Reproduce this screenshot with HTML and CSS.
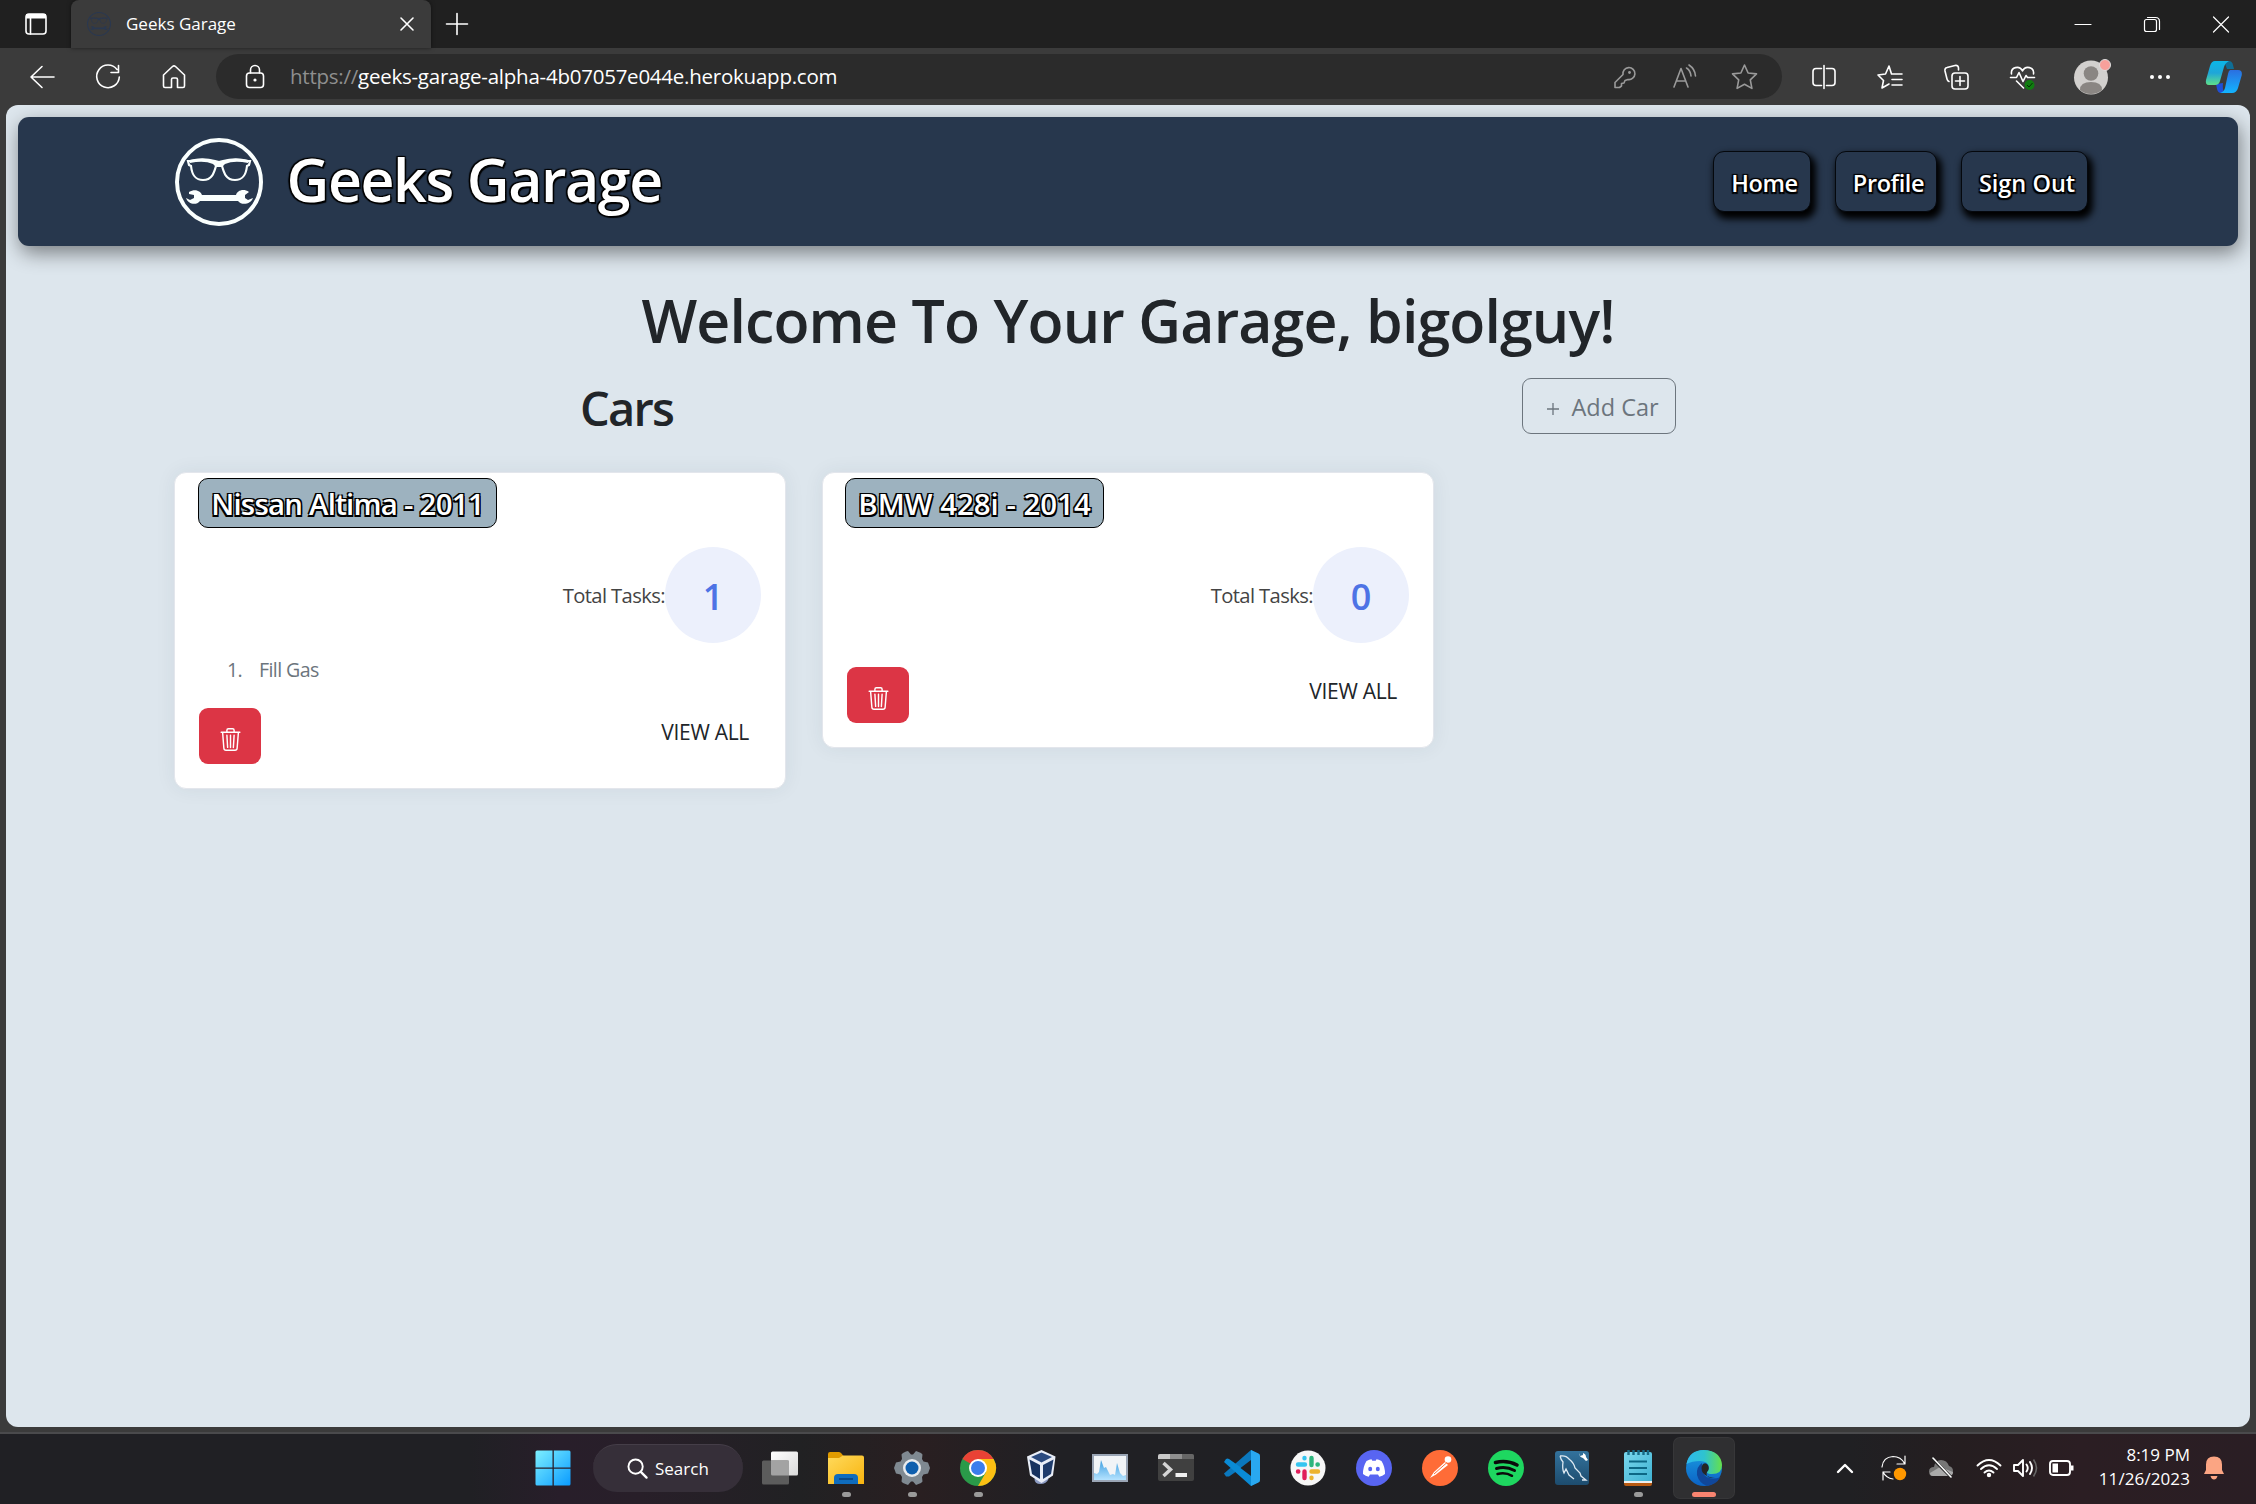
FILE: index.html
```html
<!DOCTYPE html>
<html lang="en">
<head>
<meta charset="utf-8">
<title>Geeks Garage</title>
<link rel="stylesheet" href="styles.css">
</head>
<body>
<svg class="defs" width="0" height="0">
  <defs>
    <symbol id="geek" viewBox="0 0 88 88">
      <circle cx="44" cy="44" r="42" fill="none" stroke="currentColor" stroke-width="4"/>
      <path fill="none" stroke="currentColor" stroke-width="2.2" d="M15 23c8-2 17-2 25 0l4 1 4-1c8-2 17-2 25 0l2 0-1 4-2 1c-1 9-4 14-12 14-9 0-11-7-13-14h-6c-2 7-4 14-13 14-8 0-11-5-12-14l-2-1-1-4z"/>
      <path fill="currentColor" d="M15 22q14-3 26 1h6q12-4 26-1v3q-14-3-23 1l-3 3h-6l-3-3q-9-4-23-1z"/>
      <path fill="currentColor" d="M14 54c7-4 12 0 13 3h34c1-4 7-7 13-3l-4 3v3l3 2 5-2c-2 6-11 8-15 3H25c-4 5-12 3-14-3l4 2 4-2v-3l-5-1z"/>
    </symbol>
    <symbol id="trash" viewBox="0 0 16 16">
      <path fill="currentColor" d="M6.5 1h3a.5.5 0 0 1 .5.5v1H6v-1a.5.5 0 0 1 .5-.5ZM11 2.500v-1A1.500 1.500 0 0 0 9.500 0h-3A1.500 1.500 0 0 0 5 1.500v1H2.506a.58.58 0 0 0-.01 0H1.500a.5.5 0 0 0 0 1h.538l.853 10.660A2 2 0 0 0 4.885 16h6.230a2 2 0 0 0 1.994-1.840l.853-10.660h.538a.5.5 0 0 0 0-1h-.995a.59.59 0 0 0-.01 0H11Zm1.958 1-.846 10.580a1 1 0 0 1-.997.920h-6.230a1 1 0 0 1-.997-.920L3.042 3.500h9.916Zm-7.487 1a.5.5 0 0 1 .528.470l.5 8.500a.5.5 0 0 1-.998.060L5 5.030a.5.5 0 0 1 .470-.530Zm5.058 0a.5.5 0 0 1 .470.530l-.5 8.500a.5.5 0 1 1-.998-.060l.5-8.500a.5.5 0 0 1 .528-.470ZM8 4.500a.5.5 0 0 1 .5.500v8.500a.5.5 0 0 1-1 0V5a.5.5 0 0 1 .5-.500Z"/>
    </symbol>
  </defs>
</svg>
<div class="screen">
  <div class="tabbar">
    <div class="tab-actions"><svg class="i36" viewBox="0 0 36 36"><rect x="8" y="8" width="20" height="20" rx="3" class="ln"/><path d="M8 8h20v4.500H8z" fill="#fff"/><path d="M12.500 12v16" class="ln"/></svg></div>
    <div class="tab">
      <svg class="favicon"><use href="#geek"/></svg>
      <span class="tab-title">Geeks Garage</span>
      <svg class="tab-close" viewBox="0 0 14 14"><path class="ln" d="M1 1l12 12M13 1L1 13"/></svg>
    </div>
    <svg class="new-tab" viewBox="0 0 22 22"><path class="ln" d="M11 .5v21M.5 11h21"/></svg>
    <div class="window-controls">
      <svg class="i36" viewBox="0 0 36 36"><path class="ln thin" d="M10 18.500h16"/></svg>
      <svg class="i36" viewBox="0 0 36 36"><rect class="ln thin" x="10.500" y="13.500" width="12" height="12" rx="2"/><path class="ln thin" d="M13.500 11.500h8q4 0 4 4v8"/></svg>
      <svg class="i36" viewBox="0 0 36 36"><path class="ln thin" d="M10.500 11l15 15M25.500 11l-15 15"/></svg>
    </div>
  </div>

  <div class="toolbar">
    <div class="nav-icons">
      <svg class="i36" viewBox="0 0 36 36"><path class="ln" d="M30 18H7M18 7.500L7 18l11 10.500"/></svg>
      <svg class="i36" viewBox="0 0 36 36"><path class="ln" d="M27 10.500A11.300 11.300 0 1 0 29.300 18M28.500 6.500V13.500H21"/></svg>
      <svg class="i36" viewBox="0 0 36 36"><path class="ln" d="M7.500 16L16.500 7.500q1.500-1.300 3 0L28.500 16v11q0 1.500-1.500 1.500h-5.500v-8q0-1.500-1.500-1.500h-3q-1.500 0-1.500 1.500v8H9q-1.500 0-1.500-1.500z"/></svg>
    </div>
    <div class="address">
      <svg class="i36" viewBox="0 0 36 36"><rect class="ln" x="9.500" y="14" width="17" height="14.500" rx="3"/><path class="ln" d="M13.500 14v-3a4.500 4.500 0 0 1 9 0v3"/><circle cx="18" cy="21" r="1.600" fill="#fff"/></svg>
      <span class="url"><span class="scheme">https://</span><span class="host">geeks-garage-alpha-4b07057e044e.herokuapp.com</span></span>
      <div class="address-icons">
        <svg class="i36" viewBox="0 0 36 36"><path class="ln" d="M9 23.500l8-8a6 6 0 1 1 5 5l-3 1-1 2.500-2.500.5v2.500l-2 1.500H9z"/><circle cx="23.500" cy="13.500" r="1.400" fill="#9a9a9a"/></svg>
        <svg class="i36" viewBox="0 0 36 36"><path class="ln" d="M8 28L15 9.500 22 28M10.500 22h9M20.500 9q4 2.500 4.500 8M23 6q6 4 6.500 11"/></svg>
        <svg class="i36" viewBox="0 0 36 36"><path class="ln" d="M18.500 6l3.600 8 8.400.900-6.200 6 1.600 8.500L18.500 25.300l-7.400 4.100 1.600-8.500-6.200-6 8.400-.900z"/></svg>
      </div>
    </div>
    <div class="browser-icons">
      <svg class="i36" viewBox="0 0 36 36"><path class="ln" d="M15.500 9.500H10q-3 0-3 3v11q0 3 3 3h5.500M20.500 9.500H26q3 0 3 3v11q0 3-3 3h-5.500M18 6.500v23"/></svg>
      <svg class="i36" viewBox="0 0 36 36"><path class="ln" d="M26 15h-7.500L16 7l-3.500 8-7.500 1 5.500 5.500L9 29l7-4M20 15h9M19 20.500h10M19 26h10"/></svg>
      <svg class="i36" viewBox="0 0 36 36"><rect class="ln" x="13" y="14" width="16" height="16" rx="3"/><path class="ln" d="M21 17.500v9M16.500 22h9M19.500 11V9q-.5-3-3.500-2.500L8 8.500Q5.500 9 6 12l2 8q.5 2 2 2.500"/></svg>
      <svg class="i36" viewBox="0 0 36 36"><path class="ln" d="M5.500 15c-1-7 8-9 11-3 3-6 12-4 11 3M4.500 18.500h6l2.500-5 4 9 3-6 1.500 2h7M10.500 22l7 7"/><circle cx="23.500" cy="26" r="5" fill="#107c10"/><path d="M21 26l2 2 3.500-4" fill="none" stroke="#052e05"/></svg>
      <svg class="i36" viewBox="0 0 36 36"><circle cx="17" cy="18.500" r="17" fill="#d2d0ce"/><circle cx="17" cy="14.500" r="7.300" fill="#8a8683"/><path d="M6 31q0-8 11-8t11 8a17 17 0 0 1-22 0z" fill="#8a8683"/><circle cx="31" cy="6" r="5.500" fill="#f8a09b" stroke="#ddd"/></svg>
      <svg class="i36" viewBox="0 0 36 36"><g fill="#fff"><circle cx="9" cy="18" r="2"/><circle cx="17" cy="18" r="2"/><circle cx="25" cy="18" r="2"/></g></svg>
      <svg class="i36" viewBox="0 0 36 36">
        <defs><linearGradient id="cpa" x2="0" y2="1"><stop offset="0" stop-color="#0bb7e8"/><stop offset=".5" stop-color="#1fa6d8"/><stop offset="1" stop-color="#5fe08a"/></linearGradient><linearGradient id="cpb" x2="0" y2="1"><stop offset="0" stop-color="#2b6fe0"/><stop offset="1" stop-color="#12b4ff"/></linearGradient></defs>
        <path d="M10 25l7-1q-1 7 2 10h-4q-3 0-4-4z" fill="#1f4fd8"/><path d="M18 2h5q3 0 4 4l1 4h-7z" fill="#0f6e96"/>
        <path d="M9 2h14q-4 2-5 6l-4 14q-1 4-5 4H3Q-1 26 0 21L4 7q1.500-5 5-5z" fill="url(#cpa)"/>
        <path d="M24 11h8q4.500 0 3.800 5L32 29q-1.500 5-6 5H14q4-1 5-5l3-14q.5-3 2-4z" fill="url(#cpb)"/></svg>
    </div>
  </div>

  <main class="page">
    <header class="site-nav">
      <a class="brand"><svg class="brand-logo"><use href="#geek"/></svg><span class="brand-name">Geeks Garage</span></a>
      <nav class="links">
        <a class="link home">Home</a>
        <a class="link profile">Profile</a>
        <a class="link signout">Sign Out</a>
      </nav>
    </header>
    <h1 class="welcome"><span>Welcome To Your Garage, bigolguy!</span></h1>
    <div class="cars-head">
      <h2 class="cars-title">Cars</h2>
      <button class="add-car"><svg class="plus" viewBox="0 0 12 12"><path d="M6 0v12M0 6h12" stroke="currentColor" stroke-width="1.300"/></svg><span>Add Car</span></button>
    </div>
    <section class="cards">
      <article class="card">
        <h3 class="badge nissan">Nissan Altima - 2011</h3>
        <div class="stat"><span class="stat-label">Total Tasks:</span><span class="stat-count">1</span></div>
        <ol class="tasks"><li class="task"><span class="task-no">1.</span><span class="task-name">Fill Gas</span></li></ol>
        <div class="actions"><button class="delete"><svg class="trash"><use href="#trash"/></svg></button><a class="view-all">VIEW ALL</a></div>
      </article>
      <article class="card">
        <h3 class="badge bmw">BMW 428i - 2014</h3>
        <div class="stat"><span class="stat-label">Total Tasks:</span><span class="stat-count">0</span></div>
        <div class="actions"><button class="delete"><svg class="trash"><use href="#trash"/></svg></button><a class="view-all">VIEW ALL</a></div>
      </article>
    </section>
  </main>

  <footer class="taskbar">
    <div class="apps">
      <div class="app start"><svg class="i36" viewBox="0 0 36 36"><defs><linearGradient id="win" x2="1" y2="1"><stop offset="0" stop-color="#7df0ff"/><stop offset="1" stop-color="#0a9bff"/></linearGradient></defs><path fill="url(#win)" d="M2 .5h15.500v17H.5V2Q.5.5 2 .5zM18.800.5H34q1.500 0 1.500 1.500v15.500H18.800zM.5 18.800h17v16.700H2Q.5 35.500.5 34zM18.800 18.800h16.700V34q0 1.500-1.500 1.500H18.800z"/></svg></div>
      <div class="search"><svg class="lens" viewBox="0 0 22 22"><circle cx="9" cy="9" r="7.500" fill="none" stroke="#fff" stroke-width="2"/><path d="M14.500 14.500l6 6" stroke="#fff" stroke-width="2.400" stroke-linecap="round"/></svg><span>Search</span></div>
      <div class="app"><svg class="i36" viewBox="0 0 36 36"><defs><linearGradient id="tv" x2="1" y2="1"><stop offset="0" stop-color="#fff"/><stop offset="1" stop-color="#d9d9d9"/></linearGradient></defs><rect x="9" y="1.500" width="27" height="24" rx="1.500" fill="url(#tv)"/><rect x="0" y="10.500" width="27" height="24" rx="1.500" fill="#5c5c5c"/><path d="M9 10.500h18v15H10.500Q9 25.500 9 24z" fill="#a3a3a3"/></svg></div>
      <div class="app"><svg class="i36" viewBox="0 0 36 36"><defs><linearGradient id="fo" x2="1" y2="1"><stop offset="0" stop-color="#ffda5c"/><stop offset="1" stop-color="#f8b40f"/></linearGradient></defs><path d="M0 9V4q0-2 2-2h9q1.500 0 2.500 1.500L15.500 6v3z" fill="#e09b00"/><path d="M0 8h11l4-2.500h19q2 0 2 2V34H0z" fill="url(#fo)"/><path d="M6 34v-6q0-4 4-4h16q4 0 4 4v6z" fill="#0f6cbd"/><path d="M11 29h14" stroke="#0a3f78" stroke-width="1.500"/></svg><i class="dot"></i></div>
      <div class="app"><svg class="i36" viewBox="0 0 36 36"><path d="M12 1.500l2-.5 3 3.500h2L22 1l5 2 1.500 1.500L28 9l1.500 2.500 4.500 1L36 18l-2 5.500-4.500 1L28 27l.5 4.500L27 33l-5 2-3-3.500h-2L14 35l-5-2-1.500-1.500L8 27l-1.500-2.500-4.500-1L0 18l2-5.500 4.500-1L8 9l-.5-4.500L9 3z" fill="#7f8991"/><circle cx="18" cy="18" r="9" fill="#e8ebee"/><circle cx="18" cy="18" r="6.500" fill="#0f5fae"/></svg><i class="dot"></i></div>
      <div class="app"><svg class="i36" viewBox="0 0 36 36"><circle cx="18" cy="18" r="18" fill="#2a9a49"/><path d="M18 18L2.400 9A18 18 0 0 1 33.600 9z" fill="#e94235"/><path d="M18 9h15.600A18 18 0 0 1 18 36l7.800-13.500z" fill="#fcbf13"/><circle cx="18" cy="18" r="9" fill="#fff"/><circle cx="18" cy="18" r="7" fill="#3b7ded"/></svg><i class="dot"></i></div>
      <div class="app"><svg class="i36" viewBox="1.500 0 36 36"><path d="M10 29q0 5 6 5t8-5l-3-5h-8z" fill="#8d9cc4"/><path d="M17 0l14 6.500-2.500 19L17 33 5.500 25.500 2.500 6.500z" fill="#e9eef8"/><path d="M17 2.500l10.500 4.500L17 12.500 6.500 7z" fill="#2a4a80"/><path d="M5 9.500l10.500 5.500v14L7.500 24z" fill="#17325f"/><path d="M29 9.500L18.500 15v14l8-5z" fill="#1f3c6c"/></svg></div>
      <div class="app"><svg class="i36" viewBox="0 0 36 36"><defs><linearGradient id="pm" x2="0" y2="1"><stop offset="0" stop-color="#3f9fe0"/><stop offset="1" stop-color="#b5e3ff"/></linearGradient></defs><rect x="1" y="5" width="34" height="26" fill="#f1f4f7" stroke="#9aa5b5" stroke-width="2"/><path d="M2 30v-7l3 1 2-2 2-12 3 8 2-1 4 8 3-1 2 1 2-12 3 10 3 3 3-1v5z" fill="url(#pm)"/></svg></div>
      <div class="app"><svg class="i36" viewBox="0 0 36 36"><rect y="4" width="36" height="27" rx="2" fill="#404040"/><path d="M0 9V6q0-2 2-2h10v5z" fill="#c9c9c9"/><path d="M12 4h12v5H12z" fill="#8f8f8f"/><path d="M24 4h10q2 0 2 2v3H24z" fill="#666"/><path d="M5.500 13l7 6.500-7 6.500" fill="none" stroke="#d5d5d5" stroke-width="3.500"/><path d="M17.500 23h11.500v4H17.500z" fill="#f0f0f0"/></svg></div>
      <div class="app"><svg class="i36" viewBox="0 0 36 36"><path d="M27 0L0 23.500l2 3 3 0L36 5z" fill="#0b78be"/><path d="M27 36L0 12l2-3q1.500-.8 3 0L36 31z" fill="#0a8bd6"/><path d="M27 0l7.500 3.500Q36 4.300 36 6v24q0 1.700-1.500 2.500L27 36z" fill="#29a8f0"/><path d="M27 10v16l-10.500-8z" fill="#202023"/></svg></div>
      <div class="app"><svg class="i36" viewBox="0 0 36 36"><circle cx="18" cy="18" r="17.500" fill="#f7f7f7"/><g stroke-width="4.400" stroke-linecap="round"><path d="M14.500 8v.3M8 14.500h7" stroke="#36c5f0"/><path d="M21.500 8v7M27.500 14.500h.3" stroke="#2eb67d"/><path d="M21.500 21.500h6.500M21.500 27.800v.2" stroke="#ecb22e"/><path d="M14.500 21.500v6.500M8 21.500h.3" stroke="#e01e5a"/></g></svg></div>
      <div class="app"><svg class="i36" viewBox="0 0 36 36"><circle cx="18" cy="18" r="18" fill="#5865f2"/><path d="M10.500 11q3-1.700 5-1.800l.8 1.500h3.400l.8-1.500q2 .1 5 1.800 3.700 6 3.500 13-2.500 2.200-5.700 2.700l-1.300-2.200h-8l-1.300 2.200Q9.500 26.200 7 24q-.2-7 3.500-13z" fill="#fff"/><ellipse cx="14.200" cy="19" rx="2" ry="2.300" fill="#5865f2"/><ellipse cx="21.800" cy="19" rx="2" ry="2.300" fill="#5865f2"/></svg></div>
      <div class="app"><svg class="i36" viewBox="0 0 36 36"><circle cx="18" cy="18" r="18" fill="#ff6c37"/><circle cx="26" cy="9.500" r="3.300" fill="#fff"/><path d="M23 12l3 3-12 9.500-6 3.500 4-6z" fill="#fff"/><path d="M12 24L25 12.500" stroke="#ff6c37"/></svg></div>
      <div class="app"><svg class="i36" viewBox="0 0 36 36"><circle cx="18" cy="18" r="18" fill="#1ed760"/><g fill="none" stroke="#0b0b0b" stroke-linecap="round"><path d="M7.500 12.500q11-3 21.500 2.500" stroke-width="3.600"/><path d="M8.500 18.500q9.500-2.500 18 2" stroke-width="3"/><path d="M9.500 24q8-2 14.500 1.800" stroke-width="2.500"/></g></svg></div>
      <div class="app"><svg class="i36" viewBox="0 0 36 36"><defs><linearGradient id="my" x2="0" y2="1"><stop offset="0" stop-color="#33729c"/><stop offset="1" stop-color="#1d4c6e"/></linearGradient></defs><rect x="1" y="1" width="34" height="34" rx="3" fill="url(#my)"/><path d="M6 6q6-1 9 3 5 4 6 9l5 5 1 3 5 4-4 0M6 6q1 4 3 6-1 7 1 11l2-4 3 6 5 4" fill="none" stroke="#dfeaf2" stroke-width="1.300"/><path d="M25 3l1 3 3-1 0-2q3 1 3 4l2 3-2 1-3-3q-4-1-4-5z" fill="#fff"/></svg></div>
      <div class="app"><svg class="i36" viewBox="0 0 36 36"><defs><linearGradient id="np" x2="1" y2="1"><stop offset="0" stop-color="#7ad8ee"/><stop offset="1" stop-color="#3fb2d2"/></linearGradient></defs><path d="M4 29h28v5q0 2-2 2H6q-2 0-2-2z" fill="#b85a12"/><path d="M4 30h28v3H4z" fill="#eee"/><path d="M4 4q0-2 2-2h24q2 0 2 2v27H4z" fill="url(#np)"/><path d="M8.500 0v5M13.500 0v5M18.500 0v5M23.500 0v5M28 0v5" stroke="#176a86" stroke-width="2.400"/><path d="M9 11.500h18M9 18h18M9 24h18" stroke="#0c6785" stroke-width="1.800"/></svg><i class="dot"></i></div>
      <div class="app active"><svg class="i36" viewBox="0 0 36 36"><defs><linearGradient id="ea"><stop offset="0" stop-color="#2db9ee"/><stop offset=".5" stop-color="#2fc3cf"/><stop offset="1" stop-color="#66e04a"/></linearGradient><linearGradient id="eb" x2="0" y2="1"><stop offset="0" stop-color="#1b9de2"/><stop offset="1" stop-color="#0b62c4"/></linearGradient></defs><circle cx="18" cy="18" r="18" fill="url(#eb)"/><path d="M.5 14Q3 0 18 0q17 1 18 15 0 9-10 9-5 0-5-2 2-2 2-5-1-6-9-6-8 0-13.500 3z" fill="url(#ea)"/><path d="M16 13q-6 4-5 12 2 8 10 11 9-1 13.500-9-7 3-14 0-5-3-4.500-14z" fill="#10479a"/><path d="M17 14q-3 4 0 9 4 5 12 4-6 2-8-1-1-2 0-4 3-3 1-7-2-3-5-1z" fill="#252525"/></svg><i class="dot running"></i></div>
    </div>
    <div class="tray">
      <svg class="t1" viewBox="0 0 24 24"><path class="ln bold" d="M5 16l7-7 7 7"/></svg>
      <svg class="t2" viewBox="0 0 26 26"><path class="ln thin" d="M1 12Q2 2 12 1.500q8 0 11.500 7M24 1v8h-8M2 25v-8h7M2 17q3 6 10 7"/><circle cx="19" cy="19" r="6.200" fill="#ff9800"/></svg>
      <svg class="t3" viewBox="0 0 26 26"><path d="M5 21q-4 0-4-4.500T6 12q1-7 7-7t8 6q4 1 4 5t-4 5z" fill="#777"/><path d="M5 21q-3 0-3-3l10-6 13 5q0 4-4 4z" fill="#aaa"/><path d="M4 3l19 19" stroke="#222" stroke-width="3"/><path d="M5 3l18 19" class="ln"/></svg>
      <svg class="t4" viewBox="0 0 26 26"><path class="ln bold2" d="M1.500 10.500q11.500-11 23 0M5 14q8-7.500 16 0M8.500 17.500q4.500-4 9 0"/><circle cx="13" cy="20" r="2.200" fill="#fff"/></svg>
      <svg class="t5" viewBox="0 0 26 26"><path class="ln bold2" d="M2 10v6h4l5 5V5L6 10zM14.500 9.500q2.500 3.500 0 7M18 7q4 6 0 12"/><path d="M21.500 4.500q6 8.500 0 17" fill="none" stroke="#666" stroke-width="1.600"/></svg>
      <svg class="t6" viewBox="0 0 26 26"><rect class="ln bold2" x="2" y="6" width="20" height="14" rx="3"/><path d="M4.500 8.500h5.500v9H4.500zM23 10.500h2.500v5H23z" fill="#fff"/></svg>
      <div class="clock"><span>8:19 PM</span><span class="date">11/26/2023</span></div>
      <svg class="bell" viewBox="0 0 20 24"><path d="M10 .5q8 0 8 8V14l2 4H0l2-4V8.500q0-8 8-8zM6.500 20h7q-1 3.500-3.500 3.500T6.500 20z" fill="#fba583"/></svg>
    </div>
  </footer>
</div>
</body>
</html>
```
FILE: styles.css
```css
* { box-sizing: border-box; }
body { margin: 0; background: #3b3b3b; font-family: "Open Sans", "Noto Sans", sans-serif; color: #212529; }
h1, h2, h3, ol, button { margin: 0; padding: 0; font: inherit; }
ol { list-style: none; }
.defs { display: block; }
.screen { width: 2256px; height: 1504px; display: flex; flex-direction: column; overflow: hidden; }
.screen svg { display: block; flex: none; overflow: visible; }
.screen span, .link, .view-all, .badge { white-space: nowrap; }
.i36 { width: 36px; height: 36px; }
.ln { fill: none; stroke: #fff; stroke-width: 1.6; stroke-linecap: round; stroke-linejoin: round; }
.thin { stroke-width: 1.2; }
.bold { stroke-width: 2.4; }
.bold2 { stroke-width: 1.9; }

/* Browser chrome */
.tabbar { height: 48px; background: #202020; display: flex; align-items: center; flex: none; }
.tab-actions { width: 71px; padding-left: 18px; }
.tab { width: 360px; height: 48px; background: #3b3b3b; border-radius: 8px 8px 0 0; display: flex; align-items: center; padding: 0 17px 0 16px; box-shadow: 0 0 4px rgba(0,0,0,.5); }
.favicon { width: 24px; height: 24px; color: #2a3850; }
.tab-title { font-size: 17px; color: #fff; margin: -1px 0 0 15px; flex: 1; }
.tab-close { width: 14px; height: 14px; }
.new-tab { width: 22px; height: 22px; margin-left: 15px; }
.window-controls { margin-left: auto; display: flex; gap: 33px; padding-right: 17px; }
.toolbar { height: 57px; display: flex; align-items: center; padding-left: 24px; flex: none; }
.nav-icons { display: flex; gap: 30px; width: 192px; }
.address { width: 1566px; height: 45px; background: #2b2b2b; border-radius: 23px; display: flex; align-items: center; padding: 0 20px 0 21px; }
.url { font-size: 20.5px; letter-spacing: -.24px; color: #fff; margin: -2px 0 0 17px; flex: 1; display: flex; }
.scheme { color: #8f8f8f; }
.address-icons { display: flex; gap: 24px; }
.address-icons .ln { stroke: #9a9a9a; }
.browser-icons { margin-left: 8px; display: grid; grid-template-columns: 67px 67px 66px 67px 70px 67px 60px; justify-items: center; }

/* Site */
.page { margin: 0 6px; height: 1322px; background: #dde6ed; border-radius: 12px; padding: 12px 12px 0; overflow: hidden; flex: none; }
.site-nav { height: 129px; background: #27374d; border-radius: 11px; display: flex; align-items: center; padding: 0 150px 0 157px; box-shadow: 2px 7px 20px rgba(0,0,0,.45); }
.brand { display: flex; align-items: center; }
.brand-logo { width: 88px; height: 88px; color: #fafffe; }
.brand-name { font-size: 59px; letter-spacing: -1.4px; font-weight: 600; color: #fff; margin-left: 23.5px; line-height: 80px; margin-top: -5px; text-shadow: 1.5px 2px 1px #000, -1.5px 1px 1px #000, 1px -1.5px 1px #000, -1.5px -1px 1px #000; }
.links { margin-left: auto; display: flex; gap: 24px; }
.link { height: 61px; border: 1px solid #05080d; border-radius: 11px; background: #27374d; color: #fff; font-size: 23.5px; font-weight: 600; display: flex; align-items: center; justify-content: center; padding: 3px 0 0 5px; box-shadow: 3px 5px 7px 2px #000; text-shadow: 1.5px 1.5px 1px #000, -1.5px 1.5px 1px #000, 1.5px -1px 1px #000, -1.5px -1px 1px #000; }
.home { width: 98px; letter-spacing: -.4px; }
.profile { width: 102px; letter-spacing: -.4px; }
.signout { width: 127px; }
.welcome { margin-top: 38px; height: 72px; line-height: 72px; font-size: 59px; letter-spacing: -.88px; font-weight: 600; text-align: center; }
.cars-head { display: flex; justify-content: space-between; align-items: center; margin: 21px 562.5px 0 562px; height: 58px; }
.cars-title { font-size: 47px; letter-spacing: -1.8px; font-weight: 600; line-height: 58px; padding-top: 3px; }
.add-car { width: 154px; height: 56px; border: 1.5px solid #6c757d; border-radius: 9px; background: none; color: #6c757d; font-size: 23.5px; display: flex; align-items: center; padding: 1px 0 0 24px; gap: 13px; }
.plus { width: 12px; height: 12px; margin-top: 5px; }
.cards { display: flex; align-items: flex-start; gap: 36px; margin: 37px 0 0 156px; }
.card { width: 612px; border: 1px solid #e3e6ec; border-radius: 12px; background: #fff; padding: 5px 24px 24px 23px; box-shadow: 0 0 20px rgba(39,55,77,.07); }
.badge { height: 50px; border: 1.5px solid #000; border-radius: 10px; background: #9db2bf; color: #fff; font-size: 29.4px; font-weight: 600; line-height: 51px; text-align: center; text-shadow: 1.5px 1.5px 0 #000, -1.5px 1.5px 0 #000, 1.5px -1px 0 #000, -1.5px -1px 0 #000, 0 2px 0 #000; }
.nissan { width: 299px; letter-spacing: -.75px; }
.bmw { width: 259px; margin-left: -1px; }
.stat { height: 96px; margin-top: 19px; display: flex; justify-content: flex-end; align-items: center; }
.stat-label { font-size: 20.2px; letter-spacing: -.6px; color: #444; }
.stat-count { width: 96px; height: 96px; border-radius: 50%; background: #ecf0fc; color: #4e73e5; font-size: 36px; font-weight: 600; line-height: 99px; text-align: center; }
.tasks { margin-top: 11px; }
.task { display: flex; height: 30px; line-height: 32px; font-size: 19.6px; letter-spacing: -.6px; color: #6c757d; padding-left: 29px; }
.task-no { width: 32px; }
.actions { margin-top: 24px; display: flex; justify-content: space-between; padding: 0 12px 0 1px; }
.delete { width: 62px; height: 56px; border: 0; border-radius: 9px; background: #dc3545; color: #fff; padding: 6px 0 0; display: grid; place-items: center; }
.trash { width: 23px; height: 23px; }
.view-all { font-size: 21px; letter-spacing: -.3px; line-height: 48px; color: #212529; }

/* Taskbar */
.taskbar { margin-top: 5px; height: 72px; border-top: 2px solid #4a4a4c; background: linear-gradient(90deg, #202024 0, #202024 470px, #281e2a 560px, #281f29 640px, #212123 800px, #291f21 920px, #202024 1060px, #202023 1850px, #251e20 1960px, #2b1e23 2080px, #2a1e24 100%); display: flex; align-items: flex-start; }
.apps { display: flex; padding-left: 520px; height: 70px; }
.app { width: 66px; height: 60px; margin-top: 4px; padding-top: 12px; display: flex; flex-direction: column; align-items: center; position: relative; }
.start { margin-right: 7px; }
.search { width: 150px; height: 48px; margin: 10px 4px 0 0; border-radius: 24px; background: #362f39; border-top: 1px solid #453e48; color: #fff; font-size: 17px; display: flex; align-items: center; padding-left: 34px; gap: 7px; }
.lens { width: 21px; height: 21px; }
.dot { position: absolute; bottom: 1px; width: 9px; height: 5px; border-radius: 3px; background: #9a9a9a; }
.active { width: 60px; margin-left: 3px; background: #2f2f31; border-radius: 6px; box-shadow: 0 0 0 1px #373739; }
.running { width: 24px; background: #f98470; }
.tray { margin-left: auto; display: flex; align-items: center; height: 68px; padding-right: 32px; }
.t1 { width: 24px; height: 24px; margin-right: 24px; }
.t2 { width: 26px; height: 26px; margin-right: 21px; }
.t3 { width: 26px; height: 26px; margin-right: 22px; }
.t4 { width: 26px; height: 26px; margin-right: 10px; }
.t5 { width: 26px; height: 26px; margin-right: 10px; }
.t6 { width: 26px; height: 26px; }
.clock { width: 116px; color: #fff; font-size: 17px; line-height: 24px; display: flex; flex-direction: column; align-items: flex-end; margin-top: -2px; }
.date { letter-spacing: .1px; }
.bell { width: 20px; height: 24px; margin-left: 14px; }
```
